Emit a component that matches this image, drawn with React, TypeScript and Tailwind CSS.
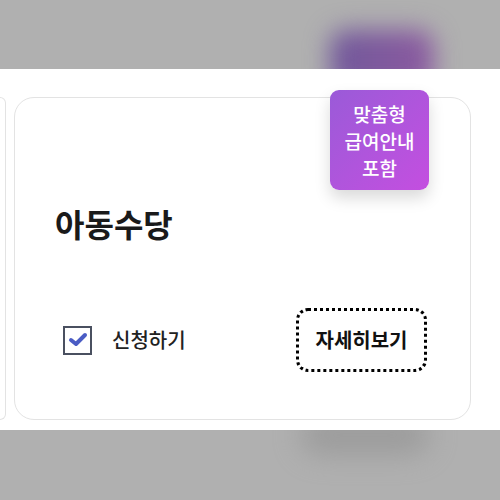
export default function App() {
  return (
    <div
      className="w-[500px] h-[500px] bg-[#b0b0b0] flex flex-col overflow-hidden"
      style={{ fontFamily: '"Noto Sans CJK KR", "Noto Sans", sans-serif' }}
    >
      {/* dimmed header with blurred badge behind */}
      <div className="relative h-[69px] shrink-0">
        <div className="absolute left-[330px] top-[30px] w-[104px] h-[60px] rounded-2xl bg-gradient-to-r from-[#70589a] to-[#8c5aa0] blur-[12px]" />
      </div>

      <div className="relative z-10 h-[361px] shrink-0 bg-white flex gap-[8px] pt-[28px]">
        <div className="w-[6px] h-[323px] border border-l-0 border-[#e3e3e3] rounded-r-[20px]" />

        <div className="relative w-[457px] h-[323px] border border-[#e3e3e3] rounded-[20px] flex flex-col px-[40px]">
          <div className="absolute left-[315px] -top-[8px] w-[99px] h-[100px] rounded-[9px] bg-gradient-to-br from-[#9a5ad8] to-[#c44ee0] shadow-[0_8px_16px_rgba(0,0,0,0.15)] flex items-center justify-center text-center text-white text-[19px] font-medium leading-[27px]">
            맞춤형
            <br />
            급여안내
            <br />
            포함
          </div>

          <h2 className="mt-[103px] text-[32px] font-bold text-[#1a1a1a] leading-[44px]">아동수당</h2>

          <div className="mt-[63px] flex items-center justify-between">
            <label className="flex items-center gap-[20px] ml-[8px]">
              <span className="w-[29px] h-[29px] border-2 border-[#4a5060] flex items-center justify-center">
                <svg width="22" height="18" viewBox="0 0 22 18">
                  <path d="M4 9 L9 13 L18 4" fill="none" stroke="#4a5cc4" strokeWidth="4" strokeLinecap="round" strokeLinejoin="round" />
                </svg>
              </span>
              <span className="text-[20px] font-medium text-[#222]">신청하기</span>
            </label>

            <button className="w-[131px] h-[64px] mr-[3px] rounded-[12px] border-[3px] border-dotted border-black text-[20px] font-bold text-[#111]">
              자세히보기
            </button>
          </div>
        </div>
      </div>

      <div className="relative flex-1">
        <div className="absolute left-[300px] -top-[15px] w-[130px] h-[40px] rounded-full bg-[#888] blur-[14px] opacity-50" />
      </div>
    </div>
  )
}
